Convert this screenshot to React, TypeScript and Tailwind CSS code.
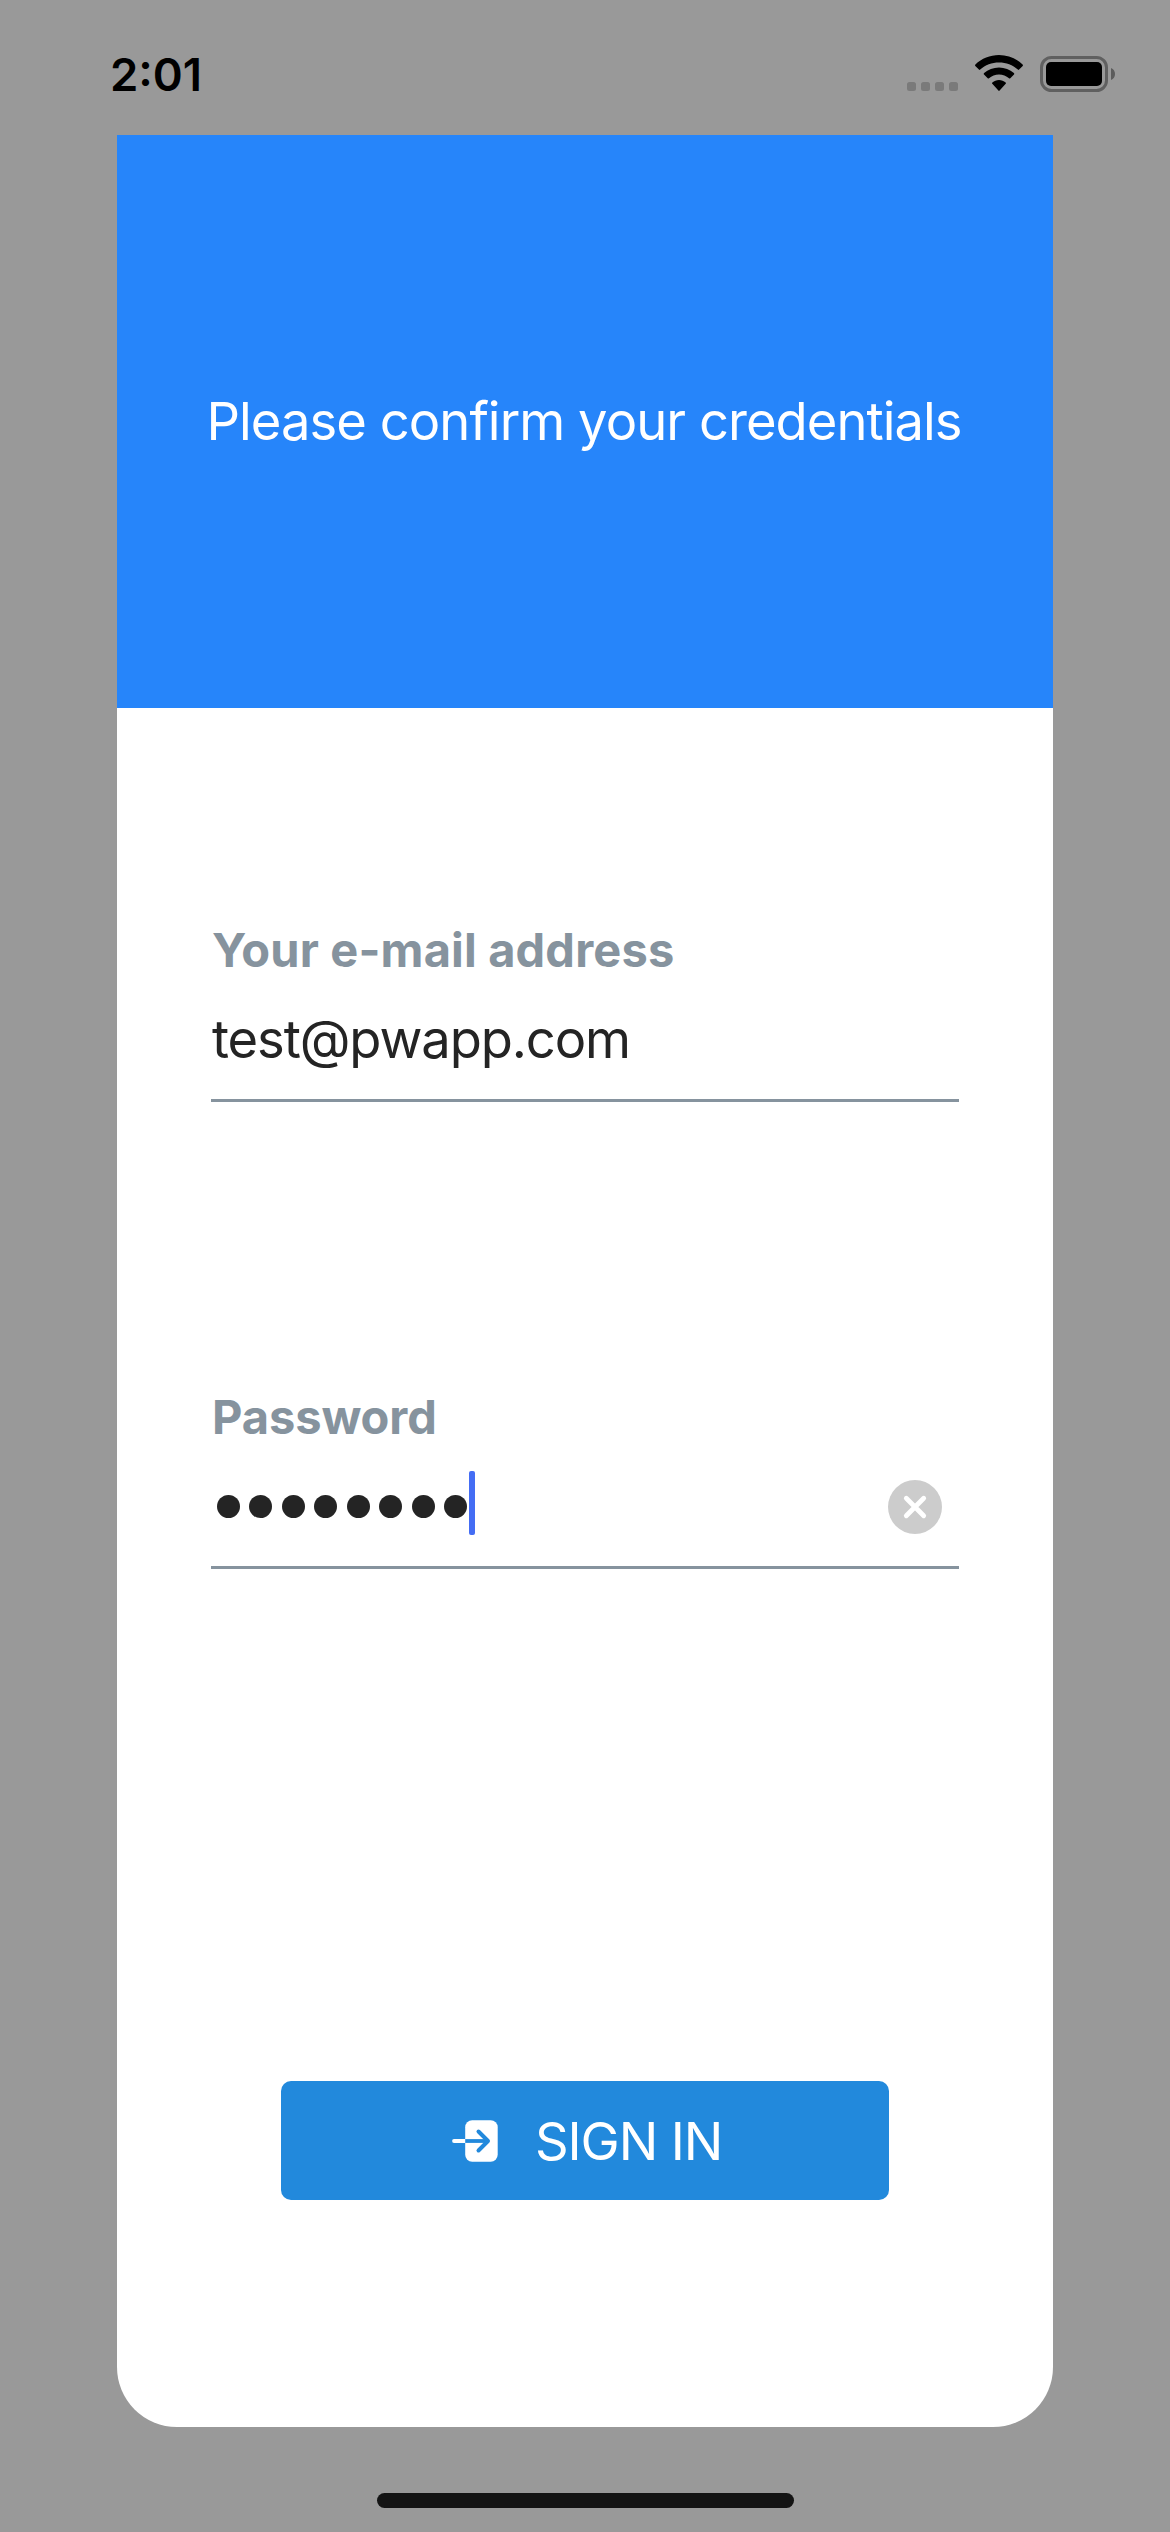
import React from "react";

function WifiIcon() {
  return (
    <svg width="48" height="36" viewBox="0 0 48 36" fill="black">
      <path d="M24 0C15 0 6.700 3.500.4 9.500c-.5.500-.5 1.100-.1 1.500l3.600 3.600c.4.400.9.400 1.300 0C10.200 10.100 16.800 7.500 24 7.500s13.800 2.600 18.800 7.100c.4.400.9.400 1.300 0l3.600-3.600c.4-.400.4-1-.1-1.500C41.300 3.500 33 0 24 0z" />
      <path d="M24 12.400c-5.700 0-10.900 2.200-14.900 5.700-.5.500-.5 1.100-.1 1.500l3.700 3.700c.4.400.9.400 1.300 0 2.700-2.300 6.200-3.700 10-3.700s7.300 1.400 10 3.700c.4.400.9.400 1.300 0l3.700-3.700c.4-.400.4-1-.1-1.500-4-3.500-9.200-5.700-14.900-5.700z" />
      <path d="M24 25c-2.500 0-4.800.9-6.600 2.400-.5.400-.5 1-.1 1.400l6.100 6.800c.4.400.8.400 1.200 0l6.100-6.800c.4-.400.4-1-.1-1.400C28.800 25.900 26.500 25 24 25z" />
    </svg>
  );
}

function BatteryIcon() {
  return (
    <svg width="75" height="36" viewBox="0 0 75 36">
      <rect x="1.500" y="1.500" width="65" height="33" rx="10" fill="none" stroke="#606060" strokeWidth="3" />
      <rect x="6" y="6" width="56" height="24" rx="5" fill="black" />
      <path d="M71 12c2.500 1 4 3.300 4 6s-1.500 5-4 6z" fill="#5c5c5c" />
    </svg>
  );
}

function SignInIcon() {
  return (
    <svg width="46" height="42" viewBox="0 0 46 42" fill="none" strokeLinecap="round" strokeLinejoin="round">
      <rect x="13.200" y="0.200" width="32.500" height="41.600" rx="7" fill="white" />
      <path d="M2 21H13" stroke="white" strokeWidth="3.800" />
      <path d="M13.200 21H36" stroke="#2289dc" strokeWidth="3.800" strokeLinecap="butt" />
      <path d="M26.500 11.500L36 21L26.500 30.500" stroke="#2289dc" strokeWidth="4" />
    </svg>
  );
}

function StatusBar() {
  return (
    <div className="flex h-[135px] items-start justify-between pl-[110px] pr-[55px] text-black">
      <span className="mt-[45px] text-[45.5px] leading-[60px] font-semibold">2:01</span>
      <div className="flex items-start">
        <div className="mt-[82px] flex gap-[5px]">
          {[0, 1, 2, 3].map((dot) => (
            <span key={dot} className="size-[9px] rounded-[2.5px] bg-[#7a7a7a]" />
          ))}
        </div>
        <div className="mt-[55px] ml-[17px]">
          <WifiIcon />
        </div>
        <div className="mt-[56px] ml-[17px]">
          <BatteryIcon />
        </div>
      </div>
    </div>
  );
}

function Field({ label, children }: { label: React.ReactNode; children: React.ReactNode }) {
  return (
    <div className="border-b-3 border-[#86939e]">
      <div className="h-[60px] pl-px text-[47px] leading-[60px] font-bold whitespace-nowrap text-[#86939e]">{label}</div>
      <div className="flex h-[119px] items-center">{children}</div>
    </div>
  );
}

export default function App() {
  return (
    <div className="flex h-[2532px] w-[1170px] flex-col overflow-hidden bg-[#999999] font-['Inter',sans-serif]">
      <StatusBar />
      <main className="mx-[117px] flex h-[2292px] flex-col overflow-hidden rounded-b-[60px] bg-white">
        <header className="flex h-[573px] shrink-0 items-center justify-center bg-[#2685fa]">
          <h1 className="mr-[2px] mb-[2px] text-[52.5px] leading-[64px] whitespace-nowrap text-white tracking-[-0.95px]">
            Please confirm your credentials
          </h1>
        </header>
        <form className="flex flex-col px-[94px] pt-[212px]">
          <Field label={<span className="tracking-[0.15px]">Your e-mail address</span>}>
            <span className="mb-[2px] ml-px text-[52.5px] leading-[64px] text-[#242424] tracking-[-1.1px]">test@pwapp.com</span>
          </Field>
          <div className="h-[285px]" />
          <Field label={<span className="tracking-[-0.1px]">Password</span>}>
            <div className="mb-px ml-[5.5px] flex gap-[9.5px]">
              {[0, 1, 2, 3, 4, 5, 6, 7].map((dot) => (
                <span key={dot} className="size-[23px] rounded-full bg-[#242424]" />
              ))}
            </div>
            <span className="mb-[7px] ml-[2px] h-[64px] w-[6px] rounded-[2px] bg-[#446df4]" />
            <svg className="mr-[17px] ml-auto" width="54" height="54" viewBox="0 0 54 54">
              <circle cx="27" cy="27" r="27" fill="#cccccc" />
              <path d="M18.300 18.300L35.700 35.700M35.700 18.300L18.300 35.700" stroke="white" strokeWidth="4.800" strokeLinecap="round" />
            </svg>
          </Field>
          <button
            type="button"
            className="mx-[70px] mt-[512px] flex h-[119px] items-center rounded-[10px] bg-[#2289dc] pl-[171px] text-white"
          >
            <SignInIcon />
            <span className="ml-[37px] text-[52.5px] leading-[64px] whitespace-nowrap tracking-[-1.1px]">SIGN IN</span>
          </button>
        </form>
      </main>
      <div className="mx-auto mt-[66px] h-[15px] w-[417px] rounded-full bg-[#141414]" />
    </div>
  );
}
